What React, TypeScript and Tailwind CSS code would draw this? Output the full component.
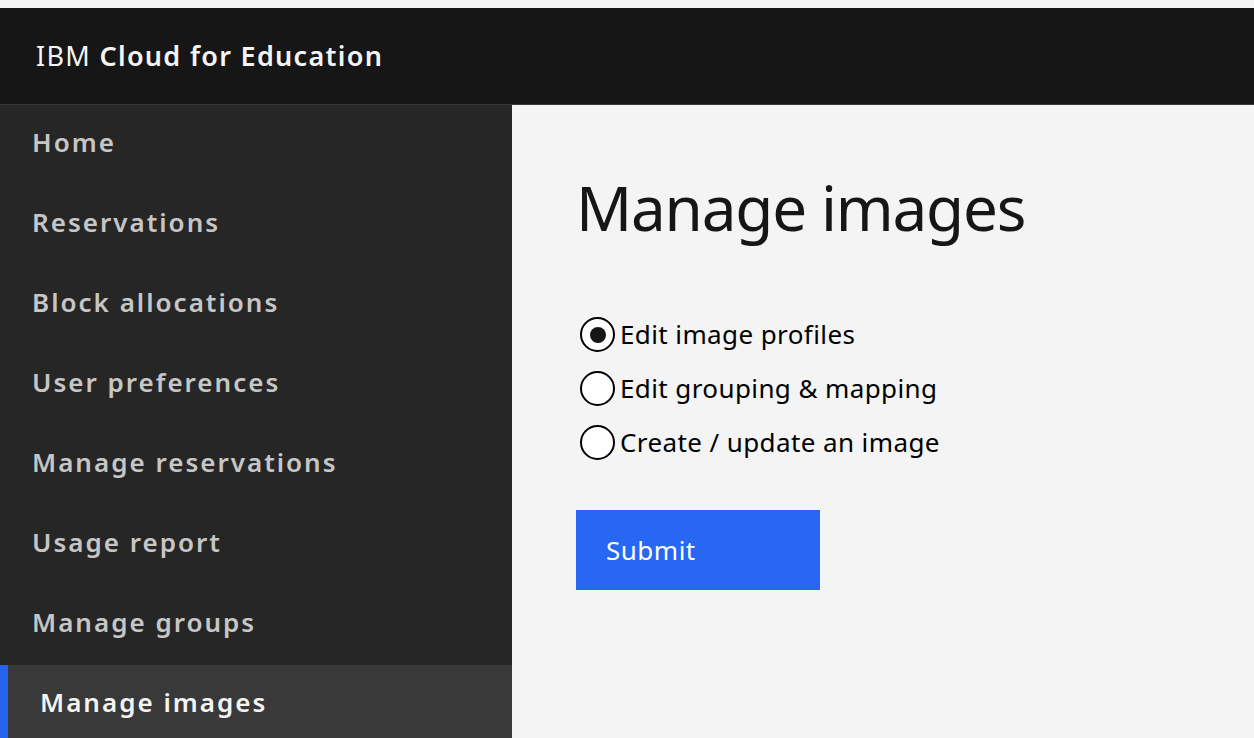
import React from "react";

const items = [
  "Home",
  "Reservations",
  "Block allocations",
  "User preferences",
  "Manage reservations",
  "Usage report",
  "Manage groups",
  "Manage images",
];

const options = ["Edit image profiles", "Edit grouping & mapping", "Create / update an image"];

export default function App() {
  const font = { fontFamily: '"Noto Sans", "Liberation Sans", sans-serif' };
  return (
    <div className="w-[1254px] h-[738px] overflow-hidden flex flex-col bg-[#f4f4f4]" style={font}>
      <div className="h-2 bg-[#f4f4f4] shrink-0" />
      <header className="h-[97px] shrink-0 bg-[#161616] border-b border-[#393939] flex items-center pl-9">
        <span className="text-[27px] text-[#f4f4f4] tracking-[1.3px]">
          IBM <span className="font-semibold">Cloud for Education</span>
        </span>
      </header>
      <div className="flex flex-1 min-h-0">
        <aside className="w-[512px] shrink-0 bg-[#262626] flex flex-col">
          {items.map((it, i) => {
            const active = i === items.length - 1;
            return (
              <div
                key={it}
                className={
                  active
                    ? "h-[80px] shrink-0 flex items-center pb-[5px] bg-[#393939] border-l-[8px] border-[#2563eb] pl-[32px] text-[#f4f4f4] text-[26px] font-semibold tracking-[2px]"
                    : "h-[80px] shrink-0 flex items-center pb-[5px] pl-[32px] text-[#c6c6c6] text-[26px] font-semibold tracking-[2px]"
                }
              >
                {it}
              </div>
            );
          })}
        </aside>
        <main className="flex-1 pl-16 pt-[62px]">
          <h1 className="text-[62px] leading-[80px] text-[#161616] font-normal tracking-[-1.2px]">Manage images</h1>
          <div className="mt-[70px] flex flex-col gap-[19px]">
            {options.map((o, i) => (
              <label key={o} className="flex items-center h-[35px] gap-[5px] text-[26px] text-black tracking-[0.4px]">
                <span className="w-[35px] h-[35px] rounded-full border-2 border-black bg-white flex items-center justify-center ml-1 shrink-0">
                  {i === 0 && <span className="w-[16px] h-[16px] rounded-full bg-[#161616]" />}
                </span>
                {o}
              </label>
            ))}
          </div>
          <button className="mt-[50px] w-[244px] h-[80px] bg-[#2767f4] text-white text-[26px] text-left pl-[30px] tracking-[0.5px]">
            Submit
          </button>
        </main>
      </div>
    </div>
  );
}
